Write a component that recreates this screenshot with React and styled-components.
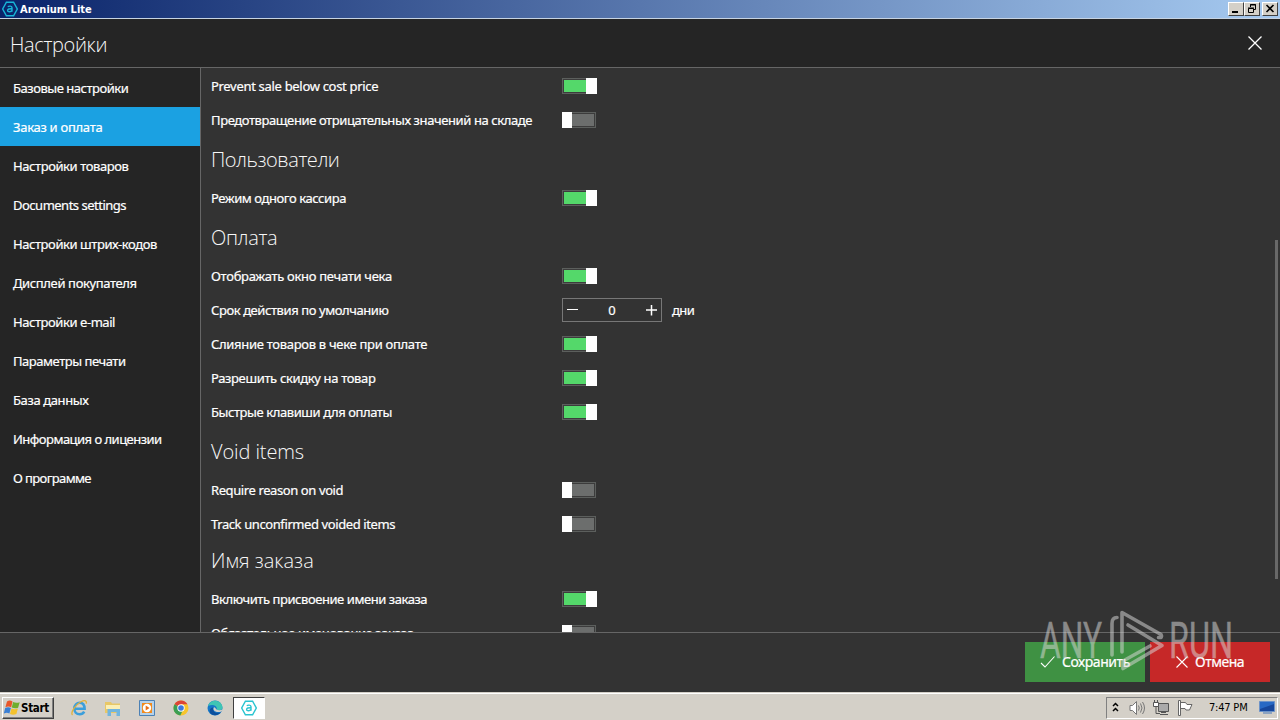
import React from "react";
import styled, { createGlobalStyle } from "styled-components";

const ui = `"Noto Sans", "Open Sans", sans-serif`;
const tahoma = `"DejaVu Sans Condensed", "DejaVu Sans", sans-serif`;

const GlobalStyle = createGlobalStyle`
  * { box-sizing: border-box; }
  body { margin: 0; background: #333; overflow: hidden; }
`;

const Screen = styled.div`
  position: relative;
  display: flex;
  flex-direction: column;
  width: 1280px;
  height: 720px;
  overflow: hidden;
  font: 13px/18px ${ui};
  color: #fff;
  background: #333;
`;

const TitleBar = styled.div`
  display: flex;
  align-items: center;
  flex: none;
  height: 19px;
  padding: 0 2px;
  border-bottom: 1px solid #c6d3e2;
  background: linear-gradient(90deg, #0a246a 0%, #a6caf0 100%);
`;

const TitleText = styled.div`
  flex: 1;
  margin-left: 2px;
  padding-top: 1px;
  font: bold 11px/16px ${tahoma};
`;

const WindowButtons = styled.div`
  display: flex;
`;

const WindowButton = styled.div`
  width: 16px;
  height: 14px;
  margin-left: ${(p) => (p.$gap ? "2px" : "0")};
  background: #d4d0c8;
  border: 1px solid;
  border-color: #fff #404040 #404040 #fff;
  svg { display: block; }
`;

const Header = styled.div`
  display: flex;
  align-items: center;
  justify-content: space-between;
  flex: none;
  height: 49px;
  padding: 0 18px 0 10px;
  background: #252525;
  border-bottom: 1px solid #666;
`;

const Heading = styled.div`
  display: flex;
  align-items: center;
  height: ${(p) => p.$height || 44}px;
  padding-top: ${(p) => (p.$top === undefined ? 2 : p.$top)}px;
  padding-bottom: ${(p) => p.$bottom || 0}px;
  font: 300 20px/28px "Open Sans", "Noto Sans", sans-serif;
  letter-spacing: ${(p) => p.$spacing || 0}px;
  color: #f8f8f8;
`;

const Body = styled.div`
  display: flex;
  flex: none;
  height: 564px;
`;

const Sidebar = styled.nav`
  display: flex;
  flex-direction: column;
  flex: none;
  width: 201px;
  background: #252525;
  border-right: 1px solid #666;
`;

const NavItem = styled.div`
  display: flex;
  align-items: center;
  flex: none;
  height: 39px;
  padding-left: 13px;
  background: ${(p) => (p.$active ? "#1ba1e2" : "transparent")};
`;

const Label = styled.span`
  white-space: nowrap;
  letter-spacing: ${(p) => p.$spacing || 0}px;
  -webkit-text-stroke: 0.2px #fff;
`;

const Content = styled.main`
  flex: 1;
  padding: 1px 0 0 10px;
  overflow: hidden;
`;

const ScrollBar = styled.div`
  flex: none;
  width: 5px;
  padding-top: 172px;
`;

const ScrollThumb = styled.div`
  width: 3px;
  height: 339px;
  background: #686868;
`;

const Row = styled.div`
  display: flex;
  align-items: center;
  height: 34px;
`;

const RowLabel = styled.div`
  display: flex;
  flex: none;
  width: 351px;
`;

const ToggleTrack = styled.div`
  display: flex;
  justify-content: ${(p) => (p.$on ? "flex-end" : "flex-start")};
  width: ${(p) => (p.$on ? 35 : 34)}px;
  height: 16px;
  background: linear-gradient(${(p) => (p.$on ? "#54d86a, #54d86a" : "#6c6e6d, #6c6e6d")}) 2px 2px / calc(100% - 4px) 12px no-repeat,
    linear-gradient(#3c3c3c, #3c3c3c) 1px 1px / calc(100% - 2px) 14px no-repeat,
    linear-gradient(#5c5f5d, #5c5f5d) 0 0 / 100% 16px no-repeat;
`;

const ToggleKnob = styled.div`
  width: ${(p) => (p.$on ? 11 : 10)}px;
  height: 16px;
  background: #fff;
`;

const Stepper = styled.div`
  display: flex;
  align-items: center;
  justify-content: space-between;
  width: 100px;
  height: 24px;
  padding: 0 4px;
  margin-right: 10px;
  border: 1px solid #777;
  svg { display: block; }
`;

const Footer = styled.div`
  display: flex;
  justify-content: flex-end;
  gap: 5px;
  flex: none;
  height: 60px;
  padding: 9px 10px 0 0;
  border-top: 1px solid #666;
`;

const ActionButton = styled.div`
  display: flex;
  align-items: center;
  width: 120px;
  height: 40px;
  padding-left: ${(p) => p.$pad}px;
  gap: 7px;
  font-size: 14px;
  background: ${(p) => p.$color};
  svg { flex: none; }
`;

const TaskBar = styled.div`
  display: flex;
  align-items: center;
  flex: none;
  height: 28px;
  padding: 2px 2px 0;
  color: #000;
  background: #d4d0c8;
  border-top: 1px solid #d4d0c8;
  box-shadow: inset 0 1px #fff;
`;

const StartButton = styled.div`
  display: flex;
  align-items: center;
  width: 52px;
  height: 22px;
  padding-left: 1px;
  gap: 1px;
  font: bold 11.5px/18px ${tahoma};
  letter-spacing: -0.3px;
  border: 1px solid;
  border-color: #fff #404040 #404040 #fff;
  box-shadow: inset -1px -1px #808080;
`;

const QuickLaunch = styled.div`
  display: flex;
  align-items: center;
  gap: 18px;
  margin-left: 17px;
  flex: 1;
  svg { flex: none; }
`;

const ActiveTask = styled.div`
  display: flex;
  align-items: center;
  justify-content: center;
  width: 32px;
  height: 22px;
  margin-left: -8px;
  background: #fff;
  border: 1px solid;
  border-color: #404040 #fff #fff #404040;
`;

const Tray = styled.div`
  display: flex;
  align-items: center;
  width: 172px;
  height: 22px;
  padding-left: 5px;
  border: 1px solid;
  border-color: #808080 #fff #fff #808080;
  svg { flex: none; }
`;

const TrayIcon = styled.svg`
  margin-left: ${(p) => p.$gap}px;
`;

const Clock = styled.div`
  width: 50px;
  margin-left: 16px;
  white-space: nowrap;
  font: 11px/16px ${tahoma};
  letter-spacing: -0.2px;
`;

const Watermark = styled.svg`
  position: absolute;
  left: 1030px;
  top: 604px;
  opacity: 0.52;
`;

const AroniumIcon = ({ size = 16, color = "#18b6d8" }) => (
  <svg width={size} height={size} viewBox="0 0 16 16" fill="none" stroke={color}>
    <path d="M4.4 1.2h7.2L15.3 8l-3.7 6.8H4.4L.7 8z" strokeWidth="1.4" />
    <path d="M5.800 5.800c1-.9 4.200-1.100 4.200 1v4M10 7.800c-2.500-.1-4.400.2-4.400 1.600 0 1.800 3.600 1.700 4.400-.2" strokeWidth="1.4" />
  </svg>
);

const Toggle = ({ on }) => (
  <ToggleTrack $on={on}>
    <ToggleKnob $on={on} />
  </ToggleTrack>
);

const nav = [
  ["Базовые настройки", -0.47],
  ["Заказ и оплата", -0.29],
  ["Настройки товаров", -0.42],
  ["Documents settings", -0.5],
  ["Настройки штрих-кодов", -0.43],
  ["Дисплей покупателя", -0.37],
  ["Настройки e-mail", -0.44],
  ["Параметры печати", -0.46],
  ["База данных", -0.38],
  ["Информация о лицензии", -0.52],
  ["О программе", -0.62],
];

const settings = [
  { label: "Prevent sale below cost price", spacing: -0.31, on: true },
  { label: "Предотвращение отрицательных значений на складе", spacing: -0.4, on: false },
  { heading: "Пользователи", spacing: -0.45 },
  { label: "Режим одного кассира", spacing: -0.43, on: true },
  { heading: "Оплата", spacing: -0.35 },
  { label: "Отображать окно печати чека", spacing: -0.3, on: true },
  { label: "Срок действия по умолчанию", spacing: -0.42, stepper: true },
  { label: "Слияние товаров в чеке при оплате", spacing: -0.3, on: true },
  { label: "Разрешить скидку на товар", spacing: -0.35, on: true },
  { label: "Быстрые клавиши для оплаты", spacing: -0.42, on: true },
  { heading: "Void items", spacing: -0.1 },
  { label: "Require reason on void", spacing: -0.4, on: false },
  { label: "Track unconfirmed voided items", spacing: -0.4, on: false },
  { heading: "Имя заказа", height: 41, top: 0, bottom: 1 },
  { label: "Включить присвоение имени заказа", spacing: -0.44, on: true },
  { label: "Обязательное именование заказа", spacing: -0.43, on: false },
];

export default function App() {
  return (
    <Screen>
      <GlobalStyle />
      <TitleBar>
        <AroniumIcon />
        <TitleText>Aronium Lite</TitleText>
        <WindowButtons>
          <WindowButton>
            <svg width="14" height="12"><path d="M3 8h6v2H3z" /></svg>
          </WindowButton>
          <WindowButton>
            <svg width="14" height="12" fill="none" stroke="#000"><path d="M5.5 4V1.5h5v5H9M5 2h6M3.5 5.5h5v4h-5zM3 5h6" /></svg>
          </WindowButton>
          <WindowButton $gap>
            <svg width="14" height="12" fill="none" stroke="#000" strokeWidth="1.6"><path d="M3.5 2l7 7M10.500 2l-7 7" /></svg>
          </WindowButton>
        </WindowButtons>
      </TitleBar>
      <Header>
        <Heading $top={3} $spacing={-0.35}>Настройки</Heading>
        <svg width="14" height="14" fill="none" stroke="#fff" strokeWidth="1.3"><path d="M.5.5l13 13M13.500.5l-13 13" /></svg>
      </Header>
      <Body>
        <Sidebar>
          {nav.map(([text, spacing], i) => (
            <NavItem key={text} $active={i === 1}>
              <Label $spacing={spacing}>{text}</Label>
            </NavItem>
          ))}
        </Sidebar>
        <Content>
          {settings.map((s) =>
            s.heading ? (
              <Heading key={s.heading} $height={s.height} $top={s.top} $bottom={s.bottom} $spacing={s.spacing}>
                {s.heading}
              </Heading>
            ) : (
              <Row key={s.label}>
                <RowLabel><Label $spacing={s.spacing}>{s.label}</Label></RowLabel>
                {s.stepper ? (
                  <>
                    <Stepper>
                      <svg width="11" height="11" stroke="#fff"><path d="M0 4.500h11" /></svg>
                      <Label>0</Label>
                      <svg width="11" height="11" stroke="#fff" strokeWidth="1.500"><path d="M0 5h11M5.500 0v10.500" /></svg>
                    </Stepper>
                    <Label $spacing={-0.6}>дни</Label>
                  </>
                ) : (
                  <Toggle on={s.on} />
                )}
              </Row>
            )
          )}
        </Content>
        <ScrollBar><ScrollThumb /></ScrollBar>
      </Body>
      <Footer>
        <ActionButton $color="#3f9143" $pad={15}>
          <svg width="15" height="14" fill="none" stroke="#fff" strokeWidth="1.1"><path d="M1 8l4 4L14.500 1.500" /></svg>
          <Label $spacing={-0.45}>Сохранить</Label>
        </ActionButton>
        <ActionButton $color="#c62828" $pad={26}>
          <svg width="12" height="12" fill="none" stroke="#fff" strokeWidth="1.1"><path d="M.5.5l11 11M11.500.5l-11 11" /></svg>
          <Label $spacing={-0.5}>Отмена</Label>
        </ActionButton>
      </Footer>
      <TaskBar>
        <StartButton>
          <svg width="16" height="16" viewBox="0 0 16 16">
            <path d="M3 1.500q2.800-1.800 5.500 0L7.200 7.200Q4.300 5.700 1.400 7.200z" fill="#e8562a" />
            <path d="M9.100 2q3 1.500 6.600.2l-1.600 5.600Q11 9 7.800 7.600z" fill="#6fae2e" />
            <path d="M1.200 8q3-1.500 5.700 0L5.400 13.600Q2.800 12 -.2 13.600z" fill="#3a7fd4" />
            <path d="M7.500 8.400q3 1.500 6.400.2l-1.500 5.400q-3.200 1.500-6.400 0z" fill="#f4c22c" />
          </svg>
          Start
        </StartButton>
        <QuickLaunch>
          <svg width="16" height="16" viewBox="0 0 16 16" fill="none">
            <path d="M4 8.800h9.600C13.500 5 11.500 2.800 8.700 2.800S3.300 5 3.300 8.500s2.200 5.800 5.400 5.800c2.200 0 3.600-1 4.500-2.600" stroke="#3c9fdb" strokeWidth="2.600" />
            <path d="M1.500 15C-1 12.500 5 4.500 10 1.800c4-2.100 6-1 5.200 1.900" stroke="#e2b13a" strokeWidth="1.300" />
          </svg>
          <svg width="16" height="16" viewBox="0 0 16 16">
            <path d="M0 2h6l1 1.500h8V13H0z" fill="#e8c766" />
            <path d="M1 5h14v4H1z" fill="#fbefb5" />
            <path d="M2.500 9h12.500v7h-3.500v-4H6v4H2.500z" fill="#72b5de" />
          </svg>
          <svg width="16" height="16" viewBox="0 0 16 16">
            <path d="M.5.5h15v15H.5z" fill="#b5d1ea" stroke="#4c81b5" />
            <path d="M3 3h10v10H3z" fill="#f28a1c" />
            <circle cx="8" cy="8" r="4.200" fill="#fff" />
            <path d="M6.700 5.500l3.800 2.500-3.800 2.500z" fill="#e8701a" />
          </svg>
          <svg width="16" height="16" viewBox="0 0 16 16">
            <circle cx="8" cy="8" r="7.500" fill="#f7c52d" />
            <path d="M8 8L1.500 4.200A7.500 7.500 0 0 1 14.500 4.300H8z" fill="#dc4437" />
            <path d="M1.500 4.200A7.500 7.500 0 0 0 7.300 15.500L10 10 8 8z" fill="#3b9e54" />
            <circle cx="8" cy="8" r="3.700" fill="#fff" />
            <circle cx="8" cy="8" r="2.800" fill="#3c78dc" />
          </svg>
          <svg width="16" height="16" viewBox="0 0 16 16">
            <circle cx="8" cy="8" r="7.500" fill="#1678c8" />
            <path d="M1 6C3-1 14-1 15.500 7c.2 3.500-4 4-6 2.500C11 6 6 3.500 1 6z" fill="#3fc5b4" />
            <path d="M6.200 7.500c-1.200 4 2.800 6.500 7.800 4.700C9 18 1 14.500 3 9.500c.7-1.500 2-2.200 3.200-2z" fill="#0e4f9c" />
            <path d="M9.500 9.500C8.500 8.500 8.300 7.500 7 7.300c-2 3.200 2 6 7.500 4.200l1.200-2.200c-2 1.200-4.600 1.200-6.200.2z" fill="#d4d0c8" />
          </svg>
          <ActiveTask><AroniumIcon color="#29c4d0" /></ActiveTask>
        </QuickLaunch>
        <Tray>
          <svg width="8" height="12" fill="none" stroke="#000" strokeWidth="1.500"><path d="M1 4l2.500-2.500L6 4M1 9l2.500-2.500L6 9" /></svg>
          <TrayIcon $gap={9} width="17" height="16" viewBox="0 0 17 16" fill="none" stroke="#777">
            <path d="M1 5.500h2.500l4-4v13l-4-4H1z" fill="#fff" />
            <path d="M9.500 5.500q1.500 2.500 0 5M11.500 3.500q3 4.500 0 9M13.500 2q4 6 0 12" />
          </TrayIcon>
          <TrayIcon $gap={7} width="17" height="16" viewBox="0 0 17 16" fill="none" stroke="#555">
            <path d="M5.500 3.500h10v8h-10z" fill="#aaa" />
            <path d="M.5 2.500h5v4h-5z" fill="#fff" />
            <path d="M1.500 0v2.500M4.500 0v2.500M3 6.500v7h4M8 12.500h5M7 14.500h8" />
          </TrayIcon>
          <TrayIcon $gap={7} width="16" height="16" viewBox="0 0 16 16" fill="#fff" stroke="#666">
            <path d="M1.500.5h2v15h-2zM3.500 2.500h5l1.500 2h5L12.500 10H9L8 8.500H3.500z" />
          </TrayIcon>
          <Clock>7:47 PM</Clock>
          <svg width="16" height="14" viewBox="0 0 16 14">
            <path d="M.5.5h15v10H.5z" fill="#2869c4" stroke="#6d93c8" />
            <path d="M1 8l14-5v7H1z" fill="#17479b" />
            <path d="M4 11h9v2H4z" fill="#8da3c0" />
          </svg>
        </Tray>
      </TaskBar>
      <Watermark width="210" height="80" fill="#d8d8d8" stroke="#d8d8d8">
        <text x="10" y="54" fontFamily="Roboto" fontWeight="400" fontSize="50" strokeWidth="0.4" textLength="62" lengthAdjust="spacingAndGlyphs">ANY</text>
        <text x="139" y="54" fontFamily="Roboto" fontWeight="400" fontSize="50" strokeWidth="0.4" textLength="64" lengthAdjust="spacingAndGlyphs">RUN</text>
        <g fill="none" strokeWidth="3.600" strokeLinecap="round" strokeLinejoin="round">
          <path d="M87 13.500q-5 0-5 6V51" />
          <path d="M92 48V8.500l39 22q2 3.500-2.500 3" />
          <path d="M98 21l34 20.500L93 64.500V57l27-15" />
        </g>
      </Watermark>
    </Screen>
  );
}
